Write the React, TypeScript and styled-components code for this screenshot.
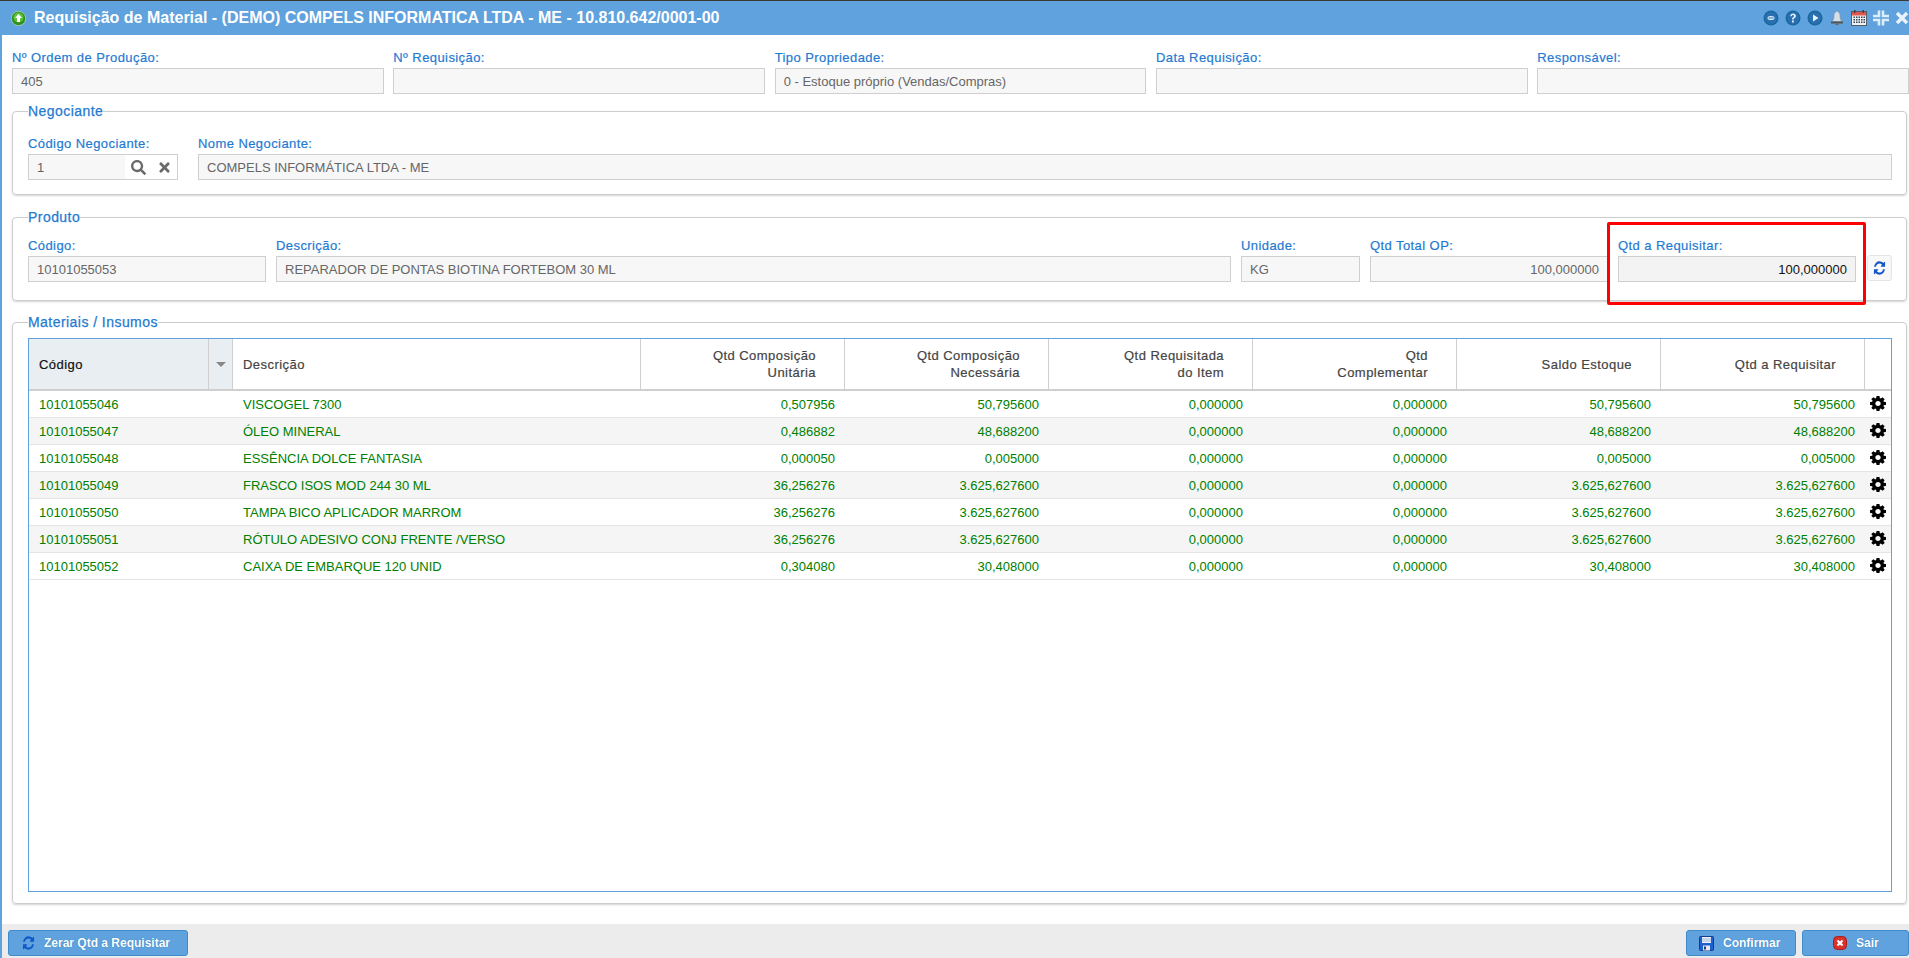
import React from "react";
import styled, { createGlobalStyle } from "styled-components";
import { FaSearch, FaTimes } from "react-icons/fa";

const Global = createGlobalStyle`
  html, body { margin: 0; padding: 0; height: 100%; background: #fff; overflow: hidden; }
  #root { height: 100%; }
  * { box-sizing: border-box; }
`;

const Page = styled.div`
  height: 958px;
  display: flex;
  flex-direction: column;
  border-left: 2px solid #5fa2dd;
  font-family: "Liberation Sans", Arial, sans-serif;
  font-size: 13px;
  color: #555;
`;
const TitleBar = styled.header`
  height: 35px;
  margin-left: -2px;
  flex: none;
  background: #5fa2dd;
  border-top: 1px solid #3b3a30;
  display: flex;
  align-items: center;
  padding: 0 0 0 11px;
`;
const Title = styled.h1`
  margin: 0 0 0 8px;
  flex: 1;
  font-size: 16px;
  font-weight: 700;
  color: #fff;
  white-space: nowrap;
`;
const TitleIcons = styled.div`
  display: flex;
  align-items: center;
  gap: 6px;
`;
const Main = styled.main`
  flex: 1;
  min-height: 0;
  display: flex;
  flex-direction: column;
  padding: 15px 0 20px 10px;
`;
const TopRow = styled.div`
  display: grid;
  grid-template-columns: repeat(5, 1fr);
  column-gap: 9.6px;
`;
const Field = styled.div<{ $w?: number }>`
  position: relative;
  ${(p) => (p.$w ? `width:${p.$w}px;flex:none;` : "flex:1;min-width:0;")}
`;
const Label = styled.div`
  height: 16px;
  line-height: 16px;
  margin-bottom: 2px;
  font-size: 13px;
  letter-spacing: 0.42px;
  -webkit-text-stroke: 0.2px #1f7ad2;
  color: #1f7ad2;
  white-space: nowrap;
`;
const Box = styled.div<{ $right?: boolean; $strong?: boolean }>`
  height: 26px;
  line-height: 26px;
  border: 1px solid #cfcfcf;
  background: ${(p) => (p.$strong ? "#f3f3f3" : "#f7f7f7")};
  color: ${(p) => (p.$strong ? "#111" : "#666")};
  font-size: 13px;
  padding: 0 8px;
  text-align: ${(p) => (p.$right ? "right" : "left")};
  white-space: nowrap;
`;
const LookupBox = styled.div`
  height: 26px;
  border: 1px solid #cfcfcf;
  display: flex;
  align-items: center;
  font-size: 13px;
  color: #666;
`;
const LookupValue = styled.div`
  width: 96px;
  height: 100%;
  line-height: 26px;
  padding: 0 8px;
  background: #f7f7f7;
`;
const LookupBtn = styled.span`
  width: 26px;
  display: flex;
  justify-content: center;
  color: #6b6b6b;
  font-size: 15px;
`;
const Group = styled.fieldset<{ $grow?: boolean }>`
  margin: 0 2px 0 0;
  min-width: 0;
  border: 1px solid #cdcdcd;
  border-radius: 4px;
  box-shadow: 0 1px 2px rgba(0, 0, 0, 0.18);
  padding: 0 14px 0 15px;
  ${(p) => (p.$grow ? "flex:1;min-height:0;display:flex;flex-direction:column;" : "")}
`;
const Legend = styled.legend`
  padding: 0;
  height: 16px;
  line-height: 16px;
  font-size: 14px;
  color: #1f7ad2;
  letter-spacing: 0.45px;
  -webkit-text-stroke: 0.25px #1f7ad2;
`;
const GroupRow = styled.div<{ $pt: number; $pb: number; $gap: number }>`
  display: flex;
  align-items: flex-start;
  gap: ${(p) => p.$gap}px;
  padding: ${(p) => p.$pt}px 0 ${(p) => p.$pb}px;
`;
const Spacer = styled.div<{ $h: number }>`
  height: ${(p) => p.$h}px;
  flex: none;
`;
const Highlight = styled.div`
  position: absolute;
  left: -11px;
  top: -16px;
  width: 259px;
  height: 83px;
  border: 3px solid #f00;
  border-radius: 2px;
  pointer-events: none;
`;
const RefreshBtn = styled.button`
  margin: 17px 0 0 1px;
  width: 25px;
  height: 26px;
  padding: 0;
  flex: none;
  border: 1px solid #e4e4e4;
  border-radius: 3px;
  background: #f8f8f8;
  display: flex;
  align-items: center;
  justify-content: center;
`;
const GridFrame = styled.div`
  flex: 1;
  min-height: 0;
  margin: 8px 0 11px;
  border: 1px solid #5fa2dd;
`;
const columns = "180px 24px 408px repeat(6, 204px) 1fr";
const HeadRow = styled.div`
  display: grid;
  grid-template-columns: ${columns};
  height: 52px;
  border-bottom: 2px solid #cfcfcf;
`;
const HeadCell = styled.div<{ $right?: boolean; $sorted?: boolean }>`
  border-right: 1px solid #cfcfcf;
  display: flex;
  align-items: center;
  justify-content: ${(p) => (p.$right ? "flex-end" : "flex-start")};
  padding: ${(p) => (p.$right ? "0 28px 0 0" : "0 0 0 10px")};
  background: ${(p) => (p.$sorted ? "#e9eef3" : "#fff")};
  color: ${(p) => (p.$sorted ? "#111" : "#444")};
  font-size: 13px;
  line-height: 17px;
  letter-spacing: 0.45px;
  -webkit-text-stroke: 0.2px ${(p) => (p.$sorted ? "#111" : "#444")};
  text-align: ${(p) => (p.$right ? "right" : "left")};
  white-space: pre-line;
  &:last-child { border-right: 0; }
`;
const ArrowCell = styled.div`
  border-right: 1px solid #cfcfcf;
  background: #e9eef3;
  display: flex;
  align-items: center;
  justify-content: center;
`;
const SortArrow = styled.span`
  width: 0;
  height: 0;
  border-left: 5px solid transparent;
  border-right: 5px solid transparent;
  border-top: 5px solid #888;
`;
const Row = styled.div<{ $alt: boolean }>`
  display: grid;
  grid-template-columns: ${columns};
  height: 27px;
  border-bottom: 1px solid #e4e4e4;
  background: ${(p) => (p.$alt ? "#f5f5f5" : "#fff")};
`;
const Cell = styled.div<{ $right?: boolean; $span?: number }>`
  ${(p) => (p.$span ? `grid-column: span ${p.$span};` : "")}
  line-height: 27px;
  font-size: 13px;
  color: #008000;
  white-space: nowrap;
  padding: ${(p) => (p.$right ? "0 10px 0 0" : "0 0 0 10px")};
  text-align: ${(p) => (p.$right ? "right" : "left")};
`;
const GearCell = styled.div`
  display: flex;
  align-items: center;
  justify-content: center;
  padding-bottom: 2px;
`;
const Footer = styled.footer`
  height: 34px;
  flex: none;
  background: #ececec;
  display: flex;
  align-items: flex-start;
  padding: 6px 0 0 6px;
  gap: 6px;
`;
const FootBtn = styled.button<{ $w: number; $pl: number }>`
  width: ${(p) => p.$w}px;
  height: 26px;
  flex: none;
  border: 1px solid #3f8ccc;
  border-radius: 3px;
  background: #5fa2dd;
  color: #fff;
  font-family: inherit;
  font-size: 12px;
  font-weight: 700;
  display: flex;
  align-items: center;
  gap: 9px;
  padding: 0 0 0 ${(p) => p.$pl}px;
  white-space: nowrap;
  text-shadow: 0 0 1px #1e6fb5;
`;
const FootSpace = styled.div`
  flex: 1;
`;

const RefreshIcon = () => (
  <svg width="13" height="16" viewBox="0 0 1792 1792" preserveAspectRatio="none" fill="#1257c9">
    <path d="M1639 1056q0 5-1 7-64 268-268 434.500t-478 166.500q-146 0-282.500-55t-243.500-157l-129 129q-19 19-45 19t-45-19-19-45v-448q0-26 19-45t45-19h448q26 0 45 19t19 45-19 45l-137 137q71 66 161 102t187 36q134 0 250-65t186-179q11-17 53-117 8-23 30-23h192q13 0 22.500 9.500t9.500 22.500zm25-800v448q0 26-19 45t-45 19h-448q-26 0-45-19t-19-45 19-45l138-138q-148-137-349-137-134 0-250 65t-186 179q-11 17-53 117-8 23-30 23h-199q-13 0-22.500-9.500t-9.500-22.500v-7q65-268 270-434.500t480-166.500q146 0 284 55.500t245 156.500l130-129q19-19 45-19t45 19 19 45z" />
  </svg>
);
const GearIcon = () => (
  <svg width="16" height="15" viewBox="128 128 1536 1536" preserveAspectRatio="none" fill="#000">
    <path d="M1152 896q0-106-75-181t-181-75-181 75-75 181 75 181 181 75 181-75 75-181zm512-109v222q0 12-8 23t-20 13l-185 28q-19 54-39 91 35 50 107 138 10 12 10 25t-9 23q-27 37-99 108t-94 71q-12 0-26-9l-138-108q-44 23-91 38-16 136-29 186-7 28-36 28h-222q-14 0-24.500-8.500t-11.500-21.500l-28-184q-49-16-90-37l-141 107q-10 9-25 9-14 0-25-11-126-114-165-168-7-10-7-23 0-12 8-23 15-21 51-66.500t54-70.500q-27-50-41-99l-183-27q-13-2-21-12.500t-8-23.500v-222q0-12 8-23t19-13l186-28q14-46 39-92-40-57-107-138-10-12-10-24 0-10 9-23 26-36 98.500-107.500t94.500-71.500q13 0 26 10l138 107q44-23 91-38 16-136 29-186 7-28 36-28h222q14 0 24.500 8.500t11.500 21.500l28 184q49 16 90 37l142-107q9-9 24-9 13 0 25 10 129 119 165 170 7 8 7 22 0 12-8 23-15 21-51 66.500t-54 70.500q26 50 41 98l183 28q13 2 22 12.500t9 23.500z" />
  </svg>
);
const Globe = ({ kind }: { kind: "chat" | "help" | "play" }) => (
  <svg width="16" height="16" viewBox="0 0 16 16">
    <circle cx="8" cy="8" r="7.500" fill="#17699f" />
    <circle cx="8" cy="8" r="6" fill="#2a6fb0" />
    {kind === "chat" && <ellipse cx="8" cy="8" rx="3.500" ry="2" fill="#dff0fb" />}
    {kind === "chat" && <rect x="5.500" y="7.500" width="5" height="1" fill="#2a6fb0" />}
    {kind === "help" && (
      <path d="M5.300 6.200C5.400 4.400 6.600 3.500 8.100 3.500c1.600 0 2.800 1 2.800 2.400 0 1.200-.7 1.700-1.400 2.200-.6.4-.8.7-.8 1.300H7c0-1.100.4-1.600 1.100-2.100.6-.4.9-.7.9-1.300 0-.6-.4-.9-1-.9-.7 0-1 .4-1.100 1.100zM7 10.500h1.800v2H7z" fill="#e8f4fc" />
    )}
    {kind === "play" && <path d="M6 4.500l5.500 3.500L6 11.500z" fill="#e8f4fc" />}
  </svg>
);
const Bell = () => (
  <svg width="16" height="16" viewBox="-1 0 16 16">
    <path d="M7 1c.6 0 1 .4 1 1 1.600.5 2 2 2 4 0 3 1 4.500 2 5.500H2c1-1 2-2.500 2-5.500 0-2 .4-3.500 2-4 0-.6.4-1 1-1z" fill="#d4dfe8" stroke="#7d8c99" strokeWidth=".6" />
    <rect x="1" y="11.500" width="12" height="2" fill="#555" />
    <rect x="5.500" y="13.500" width="3" height="1.500" fill="#666" />
  </svg>
);
const Calendar = () => (
  <svg width="16" height="16" viewBox="0 0 16 16">
    <rect x=".5" y="1.500" width="15" height="14" fill="#eef2f6" stroke="#555c66" />
    <rect x="1" y="2" width="14" height="3.500" fill="#e2564d" />
    <rect x="3" y="0" width="1.500" height="3" fill="#444" />
    <rect x="11.500" y="0" width="1.500" height="3" fill="#444" />
    {[6.5, 9, 11.5].map((y) =>
      [2.5, 5, 7.5, 10, 12.5].map((x) => <rect key={`${x}-${y}`} x={x} y={y} width="1.500" height="1.500" fill="#39424f" />)
    )}
  </svg>
);
const Compress = () => (
  <svg width="16" height="16" viewBox="0 0 16 16" fill="none" stroke="#dcecf9" strokeWidth="2.600">
    <path d="M0 6h6V.5M16 6h-6V.5M0 10h6v5.500M16 10h-6v5.500" />
  </svg>
);
const CloseX = () => (
  <svg width="14" height="14" viewBox="0 0 14 14">
    <path d="M2 2l10 10M12 2L2 12" stroke="#e8f3fc" strokeWidth="3.400" />
  </svg>
);
const UpIcon = () => (
  <svg width="15" height="15" viewBox="0 0 15 15">
    <circle cx="7.500" cy="7.500" r="7.200" fill="#2f8f1f" stroke="#d7ead0" strokeWidth=".6" />
    <circle cx="7.500" cy="6.500" r="5" fill="#5cc13d" />
    <path d="M7.500 3l3.500 4H9v4H6V7H4z" fill="#fff" />
  </svg>
);
const Floppy = () => (
  <svg width="15" height="15" viewBox="0 0 15 15">
    <rect x=".5" y=".5" width="14" height="14" rx="1" fill="#1f5fd0" stroke="#123d8a" />
    <rect x="3" y="1" width="9" height="6" fill="#eef3fa" />
    <rect x="3" y="2.500" width="9" height="1" fill="#9db4d6" />
    <rect x="3" y="4.500" width="9" height="1" fill="#9db4d6" />
    <rect x="4" y="9.500" width="7" height="5" fill="#e8e8e8" />
    <rect x="5" y="10.500" width="2" height="3" fill="#1b3f80" />
  </svg>
);
const RedX = () => (
  <svg width="14" height="14" viewBox="0 0 14 14">
    <rect x=".5" y=".5" width="13" height="13" rx="4" fill="#d8322a" stroke="#a81d18" />
    <path d="M4.500 4.500l5 5M9.500 4.500l-5 5" stroke="#fff" strokeWidth="2.200" />
  </svg>
);

const top = [
  ["Nº Ordem de Produção:", "405"],
  ["Nº Requisição:", ""],
  ["Tipo Propriedade:", "0 - Estoque próprio (Vendas/Compras)"],
  ["Data Requisição:", ""],
  ["Responsável:", ""],
];
const headers = [
  "Qtd Composição\nUnitária",
  "Qtd Composição\nNecessária",
  "Qtd Requisitada\ndo Item",
  "Qtd\nComplementar",
  "Saldo Estoque",
  "Qtd a Requisitar",
];
const rows = [
  ["10101055046", "VISCOGEL 7300", "0,507956", "50,795600", "0,000000", "0,000000", "50,795600", "50,795600"],
  ["10101055047", "ÓLEO MINERAL", "0,486882", "48,688200", "0,000000", "0,000000", "48,688200", "48,688200"],
  ["10101055048", "ESSÊNCIA DOLCE FANTASIA", "0,000050", "0,005000", "0,000000", "0,000000", "0,005000", "0,005000"],
  ["10101055049", "FRASCO ISOS MOD 244 30 ML", "36,256276", "3.625,627600", "0,000000", "0,000000", "3.625,627600", "3.625,627600"],
  ["10101055050", "TAMPA BICO APLICADOR MARROM", "36,256276", "3.625,627600", "0,000000", "0,000000", "3.625,627600", "3.625,627600"],
  ["10101055051", "RÓTULO ADESIVO CONJ FRENTE /VERSO", "36,256276", "3.625,627600", "0,000000", "0,000000", "3.625,627600", "3.625,627600"],
  ["10101055052", "CAIXA DE EMBARQUE 120 UNID", "0,304080", "30,408000", "0,000000", "0,000000", "30,408000", "30,408000"],
];

export default function App() {
  return (
    <Page>
      <Global />
      <TitleBar>
        <UpIcon />
        <Title>Requisição de Material - (DEMO) COMPELS INFORMATICA LTDA - ME - 10.810.642/0001-00</Title>
        <TitleIcons>
          <Globe kind="chat" />
          <Globe kind="help" />
          <Globe kind="play" />
          <Bell />
          <Calendar />
          <Compress />
          <CloseX />
        </TitleIcons>
      </TitleBar>
      <Main>
        <TopRow>
          {top.map(([l, v]) => (
            <Field key={l}>
              <Label>{l}</Label>
              <Box>{v}</Box>
            </Field>
          ))}
        </TopRow>
        <Spacer $h={9} />
        <Group>
          <Legend>Negociante</Legend>
          <GroupRow $pt={17} $pb={14} $gap={20}>
            <Field $w={150}>
              <Label>Código Negociante:</Label>
              <LookupBox>
                <LookupValue>1</LookupValue>
                <LookupBtn><FaSearch /></LookupBtn>
                <LookupBtn><FaTimes /></LookupBtn>
              </LookupBox>
            </Field>
            <Field>
              <Label>Nome Negociante:</Label>
              <Box>COMPELS INFORMÁTICA LTDA - ME</Box>
            </Field>
          </GroupRow>
        </Group>
        <Spacer $h={14} />
        <Group>
          <Legend>Produto</Legend>
          <GroupRow $pt={13} $pb={18} $gap={10}>
            <Field $w={238}>
              <Label>Código:</Label>
              <Box>10101055053</Box>
            </Field>
            <Field>
              <Label>Descrição:</Label>
              <Box>REPARADOR DE PONTAS BIOTINA FORTEBOM 30 ML</Box>
            </Field>
            <Field $w={119}>
              <Label>Unidade:</Label>
              <Box>KG</Box>
            </Field>
            <Field $w={238}>
              <Label>Qtd Total OP:</Label>
              <Box $right>100,000000</Box>
            </Field>
            <Field $w={238}>
              <Label>Qtd a Requisitar:</Label>
              <Box $right $strong>100,000000</Box>
              <Highlight />
            </Field>
            <RefreshBtn aria-label="Atualizar"><RefreshIcon /></RefreshBtn>
          </GroupRow>
        </Group>
        <Spacer $h={13} />
        <Group $grow>
          <Legend>Materiais / Insumos</Legend>
          <GridFrame>
            <HeadRow>
              <HeadCell $sorted>Código</HeadCell>
              <ArrowCell><SortArrow /></ArrowCell>
              <HeadCell>Descrição</HeadCell>
              {headers.map((h) => (
                <HeadCell key={h} $right>{h}</HeadCell>
              ))}
              <HeadCell />
            </HeadRow>
            {rows.map((r, i) => (
              <Row key={r[0]} $alt={i % 2 === 1}>
                <Cell $span={2}>{r[0]}</Cell>
                <Cell>{r[1]}</Cell>
                {r.slice(2).map((v, j) => (
                  <Cell key={j} $right>{v}</Cell>
                ))}
                <GearCell><GearIcon /></GearCell>
              </Row>
            ))}
          </GridFrame>
        </Group>
      </Main>
      <Footer>
        <FootBtn $w={180} $pl={13}><RefreshIcon />Zerar Qtd a Requisitar</FootBtn>
        <FootSpace />
        <FootBtn $w={110} $pl={12}><Floppy />Confirmar</FootBtn>
        <FootBtn $w={107} $pl={30}><RedX />Sair</FootBtn>
      </Footer>
    </Page>
  );
}
